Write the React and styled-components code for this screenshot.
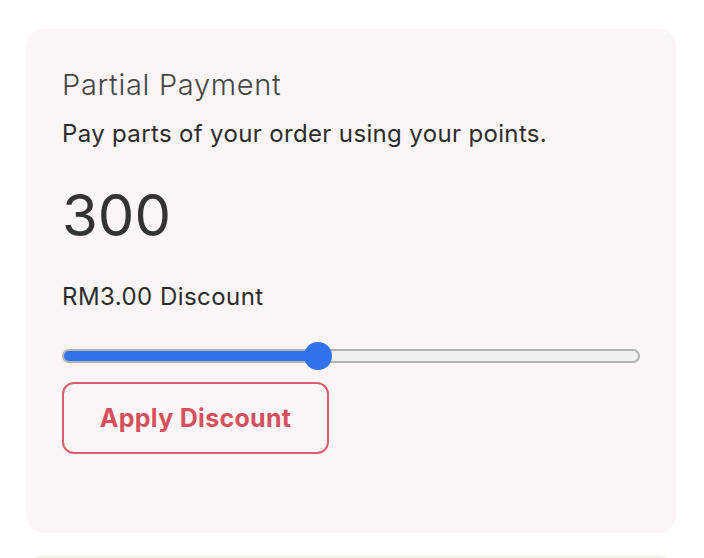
import React, { useState } from "react";
import styled, { createGlobalStyle } from "styled-components";

const GlobalStyle = createGlobalStyle`
  body {
    margin: 0;
    background: #ffffff;
    font-family: Inter, Roboto, "Liberation Sans", sans-serif;
  }
`;

const Page = styled.main`
  padding: 29px 28px 0 26px;
  display: flex;
  flex-direction: column;
  gap: 22px;
`;

const Card = styled.section`
  background: #fcf5f7;
  border-radius: 18px;
  padding: 36px 36px 40px 36px;
  height: 504px;
  box-sizing: border-box;
  display: flex;
  flex-direction: column;
`;

const NextCard = styled.div`
  background: #f6f5ec;
  height: 20px;
  border-radius: 18px 18px 0 0;
`;

const Title = styled.h2`
  margin: 0;
  font-weight: 300;
  font-size: 29px;
  letter-spacing: 0.7px;
  line-height: 40px;
  color: #444444;
`;

const Subtitle = styled.p`
  margin: 14px 0 0;
  font-size: 24px;
  letter-spacing: 0.35px;
  line-height: 30px;
  color: #2b2b2b;
`;

const Points = styled.div`
  margin-top: 31px;
  font-size: 58px;
  line-height: 70px;
  color: #333333;
`;

const Discount = styled.div`
  margin-top: 32px;
  font-size: 24px;
  letter-spacing: 0.45px;
  line-height: 30px;
  color: #2b2b2b;
`;

const Range = styled.input`
  -webkit-appearance: none;
  appearance: none;
  margin: 37px 0 0;
  width: 578px;
  height: 14px;
  border-radius: 7px;
  border: 2px solid #b3b3b3;
  box-sizing: border-box;
  background: ${(p) =>
    `linear-gradient(to right, #3173ee 0%, #3173ee ${p.$pct}%, #efefef ${p.$pct}%, #efefef 100%)`};
  outline: none;

  &::-webkit-slider-thumb {
    -webkit-appearance: none;
    width: 28px;
    height: 28px;
    border-radius: 50%;
    background: #3173ee;
    border: none;
  }
`;

const ApplyButton = styled.button`
  margin-top: 19px;
  align-self: flex-start;
  width: 267px;
  height: 72px;
  border: 2px solid #d9606a;
  border-radius: 12px;
  background: transparent;
  color: #d6505c;
  font-family: Inter, Roboto, "Liberation Sans", sans-serif;
  font-weight: 700;
  font-size: 25px;
  letter-spacing: 0.3px;
  cursor: pointer;
`;

export default function App() {
  const [value, setValue] = useState(300);
  const max = 682;
  const pct = (value / max) * 100;

  return (
    <>
      <GlobalStyle />
      <Page>
        <Card>
          <Title>Partial Payment</Title>
          <Subtitle>Pay parts of your order using your points.</Subtitle>
          <Points>{value}</Points>
          <Discount>RM{(value / 100).toFixed(2)} Discount</Discount>
          <Range
            type="range"
            min={0}
            max={max}
            value={value}
            $pct={pct}
            onChange={(e) => setValue(Number(e.target.value))}
          />
          <ApplyButton>Apply Discount</ApplyButton>
        </Card>
        <NextCard />
      </Page>
    </>
  );
}
